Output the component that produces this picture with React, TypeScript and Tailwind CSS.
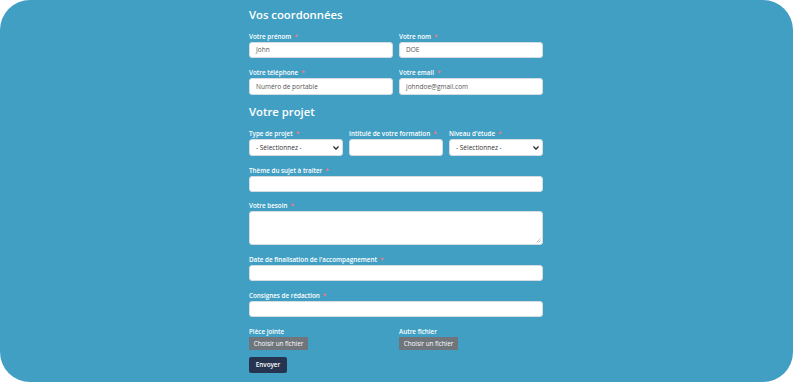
import React from "react";

const font = { fontFamily: '"Open Sans", "Liberation Sans", sans-serif' };

function Label({ text, req = true }: { text: string; req?: boolean }) {
  return (
    <div className="h-[9px] leading-[9px] text-[6.3px] font-semibold text-white whitespace-nowrap mb-[1px]">
      {text}
      {req && <span className="text-[#f07a7a] ml-[3px]">*</span>}
    </div>
  );
}

function Input({ value = "", h = "h-[16px]" }: { value?: string; h?: string }) {
  return (
    <div
      className={`${h} w-full bg-white rounded-[3px] border border-[#d5dde3] flex items-center pl-[6px] text-[6.5px] text-[#555]`}
    >
      {value}
    </div>
  );
}

function Select() {
  return (
    <div className="h-[17px] w-full bg-white rounded-[3px] border border-[#d5dde3] flex items-center justify-between pl-[6px] pr-[3px] text-[6.5px] text-[#333]">
      <span>- Sélectionnez -</span>
      <svg width="6" height="4" viewBox="0 0 6 4">
        <path d="M0.5 0.5 L3 3.2 L5.5 0.5" stroke="#222" strokeWidth="1.2" fill="none" />
      </svg>
    </div>
  );
}

function FileBtn() {
  return (
    <div className="h-[13px] w-[59px] bg-[#6f757b] flex items-center justify-center text-[6.3px] text-white">
      Choisir un fichier
    </div>
  );
}

export default function App() {
  return (
    <div className="w-[793px] h-[382px] bg-white" style={font}>
      <div className="w-full h-full bg-[#429fc4] rounded-[30px] overflow-hidden">
        <div className="w-[294px] ml-[249px] flex flex-col pt-[6px]">
          <div className="h-[18px] leading-[18px] text-[11.3px] font-semibold text-white mb-[8px]">
            Vos coordonnées
          </div>
          <div className="grid grid-cols-2 gap-x-[6px]">
            <div>
              <Label text="Votre prénom" />
              <Input value="John" />
            </div>
            <div>
              <Label text="Votre nom" />
              <Input value="DOE" />
            </div>
          </div>
          <div className="grid grid-cols-2 gap-x-[6px] mt-[10px]">
            <div>
              <Label text="Votre téléphone" />
              <Input value="Numéro de portable" h="h-[17px]" />
            </div>
            <div>
              <Label text="Votre email" />
              <Input value="johndoe@gmail.com" h="h-[17px]" />
            </div>
          </div>
          <div className="h-[18px] leading-[18px] text-[11.3px] font-semibold text-white mt-[8px] mb-[8px]">
            Votre projet
          </div>
          <div className="grid grid-cols-3 gap-x-[6px]">
            <div>
              <Label text="Type de projet" />
              <Select />
            </div>
            <div>
              <Label text="Intitulé de votre formation" />
              <Input h="h-[17px]" />
            </div>
            <div>
              <Label text="Niveau d'étude" />
              <Select />
            </div>
          </div>
          <div className="mt-[10px]">
            <Label text="Thème du sujet à traiter" />
            <Input />
          </div>
          <div className="mt-[9px]">
            <Label text="Votre besoin" />
            <div className="relative h-[34px] w-full bg-white rounded-[3px] border border-[#d5dde3]">
              <svg className="absolute right-[1px] bottom-[1px]" width="5" height="5" viewBox="0 0 5 5">
                <path d="M4.5 0.5 L0.5 4.5 M4.5 2.5 L2.5 4.5" stroke="#999" strokeWidth="0.6" />
              </svg>
            </div>
          </div>
          <div className="mt-[10px]">
            <Label text="Date de finalisation de l'accompagnement" />
            <Input />
          </div>
          <div className="mt-[10px]">
            <Label text="Consignes de rédaction" />
            <Input />
          </div>
          <div className="grid grid-cols-2 gap-x-[6px] mt-[10px]">
            <div>
              <Label text="Pièce jointe" req={false} />
              <FileBtn />
            </div>
            <div>
              <Label text="Autre fichier" req={false} />
              <FileBtn />
            </div>
          </div>
          <div className="mt-[7px] h-[16px] w-[38px] bg-[#26344f] rounded-[2px] flex items-center justify-center text-[6.3px] font-semibold text-white">
            Envoyer
          </div>
        </div>
      </div>
    </div>
  );
}
